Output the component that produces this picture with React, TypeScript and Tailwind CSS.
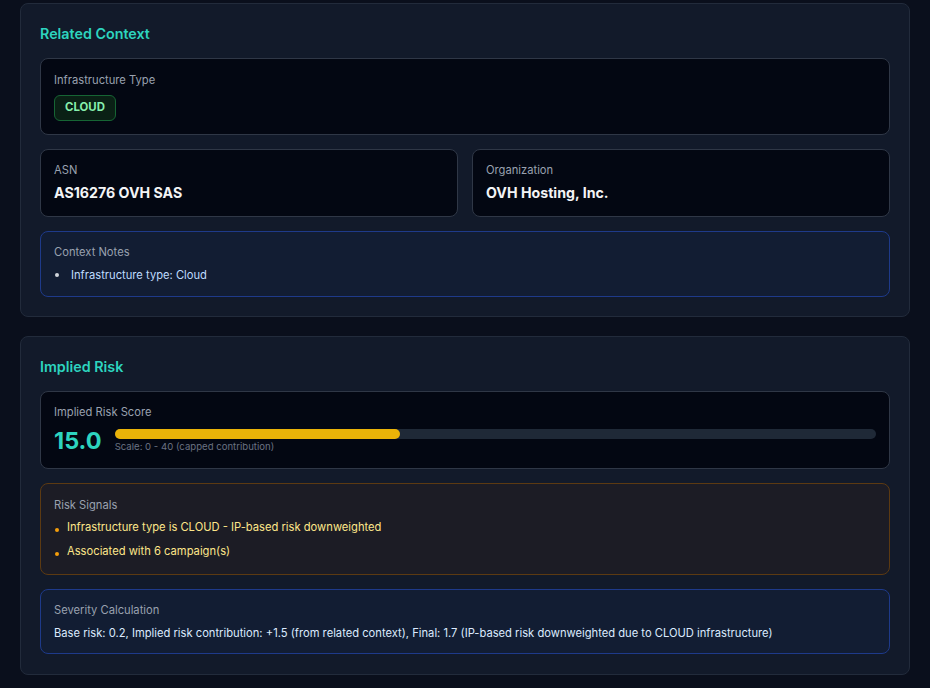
import React from 'react';

/**
 * Related context + implied risk panels for an IP detail view.
 */

const signals = [
  'Infrastructure type is CLOUD - IP-based risk downweighted',
  'Associated with 6 campaign(s)',
];

function Box({ className, children }: { className: string; children: React.ReactNode }) {
  return <div className={`rounded-lg border px-[13px] ${className}`}>{children}</div>;
}

const label = 'text-[11.2px] leading-4 text-gray-400';

export default function App() {
  const score = 15.0;
  const max = 40;

  return (
    <div
      className="min-h-[688px] bg-[#0a0f1c] px-5 pt-[3px] pb-4 text-gray-200"
      style={{ fontFamily: 'Inter, "Noto Sans", sans-serif' }}
    >
      <div className="flex flex-col gap-[19px]">
        <section className="rounded-lg border border-[#222b3b] bg-[#121a2a] px-[19px] pt-[18px] pb-[19px]">
          <h2 className="mb-3 text-[14.3px] font-semibold leading-6 text-[#2dd4bf]">Related Context</h2>
          <div className="flex flex-col gap-[14px]">
            <Box className="border-[#2f3746] bg-[#030712] pt-[13px] pb-[13px]">
              <div className={label}>Infrastructure Type</div>
              <span className="mt-[7px] flex h-[26px] w-fit items-center rounded-md border border-[#166534] bg-[#0a2015] px-[10px] text-[11.4px] font-bold text-[#86efac]">
                CLOUD
              </span>
            </Box>
            <div className="grid grid-cols-2 gap-[14px]">
              <Box className="border-[#2f3746] bg-[#030712] pt-3 pb-[11px]">
                <div className={label}>ASN</div>
                <div className="mt-[3px] text-[14.2px] font-bold leading-6 text-gray-100">AS16276 OVH SAS</div>
              </Box>
              <Box className="border-[#2f3746] bg-[#030712] pt-3 pb-[11px]">
                <div className={label}>Organization</div>
                <div className="mt-[3px] text-[14.2px] font-bold leading-6 text-gray-100">OVH Hosting, Inc.</div>
              </Box>
            </div>
            <Box className="border-[#1e3a8a] bg-[#121d33] pt-3 pb-[13px]">
              <div className={label}>Context Notes</div>
              <ul className="mt-[7px]">
                <li className="flex items-center gap-3 text-[11.2px] leading-4 text-[#bfdbfe]">
                  <span className="ml-[1px] h-1 w-1 rounded-full bg-gray-300" />
                  Infrastructure type: Cloud
                </li>
              </ul>
            </Box>
          </div>
        </section>

        <section className="rounded-lg border border-[#222b3b] bg-[#121a2a] px-[19px] pt-[18px] pb-5">
          <h2 className="mb-3 text-[14.3px] font-semibold leading-6 text-[#2dd4bf]">Implied Risk</h2>
          <div className="flex flex-col gap-[14px]">
            <Box className="border-[#2f3746] bg-[#030712] pt-3 pb-[11px]">
              <div className={label}>Implied Risk Score</div>
              <div className="mt-[5px] flex items-start gap-[13px]">
                <div className="text-[23.5px] font-bold leading-8 text-[#2dd4bf]">{score.toFixed(1)}</div>
                <div className="flex-1 pt-1">
                  <div className="h-[10px] w-full rounded-full bg-[#1f2937]">
                    <div className="h-full rounded-full bg-[#eab308]" style={{ width: `${(score / max) * 100}%` }} />
                  </div>
                  <div className="mt-[2px] text-[9.6px] leading-3 text-gray-500">Scale: 0 - 40 (capped contribution)</div>
                </div>
              </div>
            </Box>
            <Box className="border-[#5c3a12] bg-[#1c1c25] pt-[13px] pb-[11px]">
              <div className={label}>Risk Signals</div>
              <ul className="mt-[2px] flex flex-col">
                {signals.map((s) => (
                  <li key={s} className="flex items-center gap-[8px] text-[11.2px] leading-6 text-[#fde68a]">
                    <span className="mt-[5px] ml-[1px] h-1 w-1 rounded-full bg-[#f59e0b]" />
                    {s}
                  </li>
                ))}
              </ul>
            </Box>
            <Box className="border-[#1e3a8a] bg-[#121d33] pt-3 pb-3">
              <div className={label}>Severity Calculation</div>
              <div className="mt-[7px] text-[11.2px] leading-4 text-[#dbeafe]">
                Base risk: 0.2, Implied risk contribution: +1.5 (from related context), Final: 1.7 (IP-based risk downweighted due to CLOUD infrastructure)
              </div>
            </Box>
          </div>
        </section>
      </div>
    </div>
  );
}
